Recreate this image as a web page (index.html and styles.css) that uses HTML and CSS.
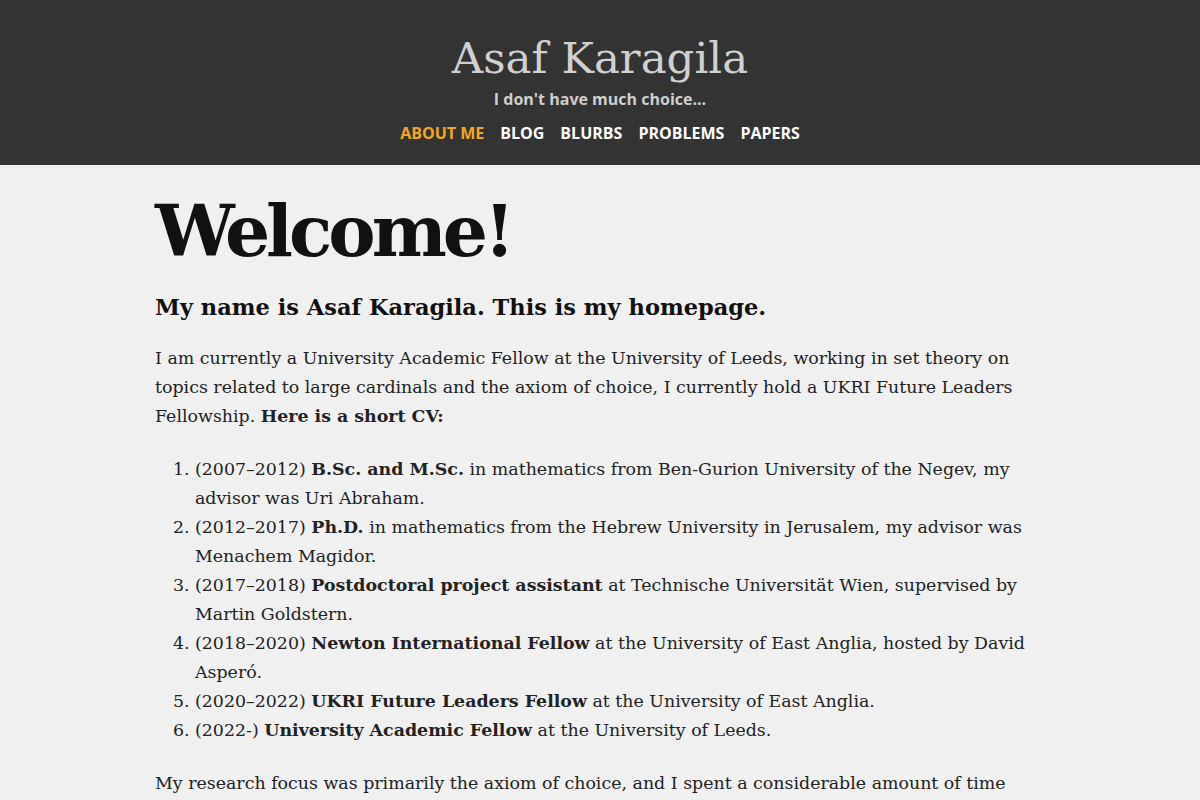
FILE: index.html
```html
<!DOCTYPE html>
<html lang="en">
<head>
<meta charset="utf-8">
<title>Asaf Karagila</title>
<link rel="stylesheet" href="styles.css">
</head>
<body>
<header class="site-header">
  <div class="site-title">Asaf Karagila</div>
  <div class="site-tagline">I don't have much choice...</div>
  <nav class="site-nav">
    <a class="nav-link active" href="#">About me</a>
    <a class="nav-link" href="#">Blog</a>
    <a class="nav-link" href="#">Blurbs</a>
    <a class="nav-link" href="#">Problems</a>
    <a class="nav-link" href="#">Papers</a>
  </nav>
</header>
<main class="content">
  <h1 class="welcome">Welcome!</h1>
  <h2 class="intro">My name is Asaf Karagila. This is my homepage.</h2>
  <p>I am currently a University Academic Fellow at the University of Leeds, working in set theory on topics related to large cardinals and the axiom of choice, I currently hold a UKRI Future Leaders Fellowship. <strong>Here is a short CV:</strong></p>
  <ol class="cv">
    <li>(2007–2012) <strong>B.Sc. and M.Sc.</strong> in mathematics from Ben-Gurion University of the Negev, my advisor was Uri Abraham.</li>
    <li>(2012–2017) <strong>Ph.D.</strong> in mathematics from the Hebrew University in Jerusalem, my advisor was Menachem Magidor.</li>
    <li>(2017–2018) <strong>Postdoctoral project assistant</strong> at Technische Universität Wien, supervised by Martin Goldstern.</li>
    <li>(2018–2020) <strong>Newton International Fellow</strong> at the University of East Anglia, hosted by David Asperó.</li>
    <li>(2020–2022) <strong>UKRI Future Leaders Fellow</strong> at the University of East Anglia.</li>
    <li>(2022-) <strong>University Academic Fellow</strong> at the University of Leeds.</li>
  </ol>
  <p>My research focus was primarily the axiom of choice, and I spent a considerable amount of time developing new techniques for creating models where the axiom of choice fails, and studying their properties in various settings.</p>
</main>
</body>
</html>
```
FILE: styles.css
```css
html, body {
  margin: 0;
  padding: 0;
}
body {
  background: #f0f0f0;
  color: #222;
  font-family: "DejaVu Serif", "Liberation Serif", serif;
  font-size: 17.4px;
  line-height: 29px;
}
.site-header {
  background: #333;
  height: 165px;
  box-sizing: border-box;
  padding-top: 30px;
  text-align: center;
}
.site-title {
  font-family: "DejaVu Serif", serif;
  font-size: 43.5px;
  line-height: 56px;
  color: #d0d0d0;
}
.site-tagline {
  font-family: "Open Sans", sans-serif;
  font-weight: 700;
  font-size: 16px;
  line-height: 26px;
  color: #cfcfcf;
  margin-top: 0;
}
.site-nav {
  display: flex;
  justify-content: center;
  gap: 16px;
  margin-top: 8px;
}
.nav-link {
  font-family: "Open Sans", sans-serif;
  font-weight: 700;
  font-size: 16px;
  line-height: 26px;
  color: #fff;
  text-decoration: none;
  text-transform: uppercase;
}
.nav-link.active {
  color: #f5a623;
}
.content {
  width: 890px;
  margin: 0 auto;
  padding-top: 18px;
}
.welcome {
  font-size: 71px;
  line-height: 96px;
  font-weight: 700;
  margin: 0;
  color: #111;
  letter-spacing: -4px;
}
.intro {
  font-size: 22.5px;
  line-height: 36px;
  font-weight: 700;
  margin: 10px 0 19px;
  color: #111;
}
p {
  margin: 0 0 24px;
}
.cv {
  margin: 0 0 24px;
  padding-left: 40px;
}
strong {
  font-weight: 700;
}
```
